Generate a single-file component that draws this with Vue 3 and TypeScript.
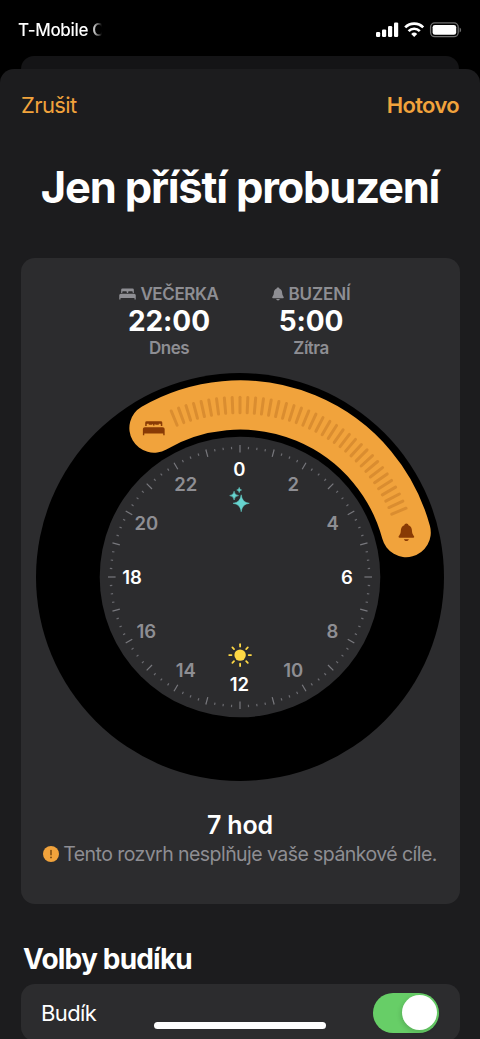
<script setup lang="ts">
interface Tick {
  angle: number
  major: boolean
}

interface HourLabel {
  text: string
  x: number
  y: number
  strong: boolean
}

const ticks: Tick[] = Array.from({ length: 96 }, (_, i) => ({
  angle: i * 3.75,
  major: i % 4 === 0,
}))

const grips: number[] = Array.from({ length: 37 }, (_, i) => -22.5 + i * 2.5)

const hours: HourLabel[] = Array.from({ length: 12 }, (_, i) => {
  const hour = i * 2
  const a = (hour * 15 * Math.PI) / 180
  return {
    text: String(hour),
    x: 203.4 + Math.sin(a) * 107.5,
    y: 210.9 - Math.cos(a) * 107.5,
    strong: hour % 6 === 0,
  }
})

function polar(angle: number, r: number): string {
  const a = (angle * Math.PI) / 180
  return `${(204 + Math.sin(a) * r).toFixed(2)} ${(204 - Math.cos(a) * r).toFixed(2)}`
}

const arc = `M${polar(-30, 172)} A172 172 0 0 1 ${polar(75, 172)}`
</script>

<template>
  <div class="phone">
    <header class="status">
      <span class="carrier">T-Mobile C</span>
      <svg class="status-icons" width="88" height="18" viewBox="0 0 88 18">
        <g fill="#fff">
          <rect x="1" y="11" width="4.2" height="5" rx="1.2" />
          <rect x="7" y="8.4" width="4.2" height="7.6" rx="1.2" />
          <rect x="13" y="5" width="4.2" height="11" rx="1.2" />
          <rect x="19" y="1.4" width="4.2" height="14.6" rx="1.2" />
        </g>
        <g fill="none" stroke="#fff" stroke-width="2.7">
          <path d="M30.2 6.4a12.6 12.6 0 0 1 18 0" />
          <path d="M33.6 10.1a7.9 7.9 0 0 1 11.2 0" />
        </g>
        <path d="M39.2 16.1l-3-3.1a4.3 4.3 0 0 1 6 0z" fill="#fff" />
        <rect x="55.6" y="1.9" width="27.6" height="13.8" rx="4.2" fill="none" stroke="#6e6e6e" stroke-width="1.3" />
        <rect x="57.6" y="3.9" width="23.6" height="9.9" rx="2.4" fill="#fff" />
        <path d="M84.6 6.4c2 .7 2 4.3 0 5z" fill="#6e6e6e" />
      </svg>
    </header>

    <div class="back-sheet"></div>

    <main class="sheet">
      <nav class="nav">
        <button class="link" type="button">Zrušit</button>
        <button class="link done" type="button">Hotovo</button>
      </nav>

      <h1>Jen příští probuzení</h1>

      <section class="card">
        <div class="times">
          <div class="time">
            <div class="label">
              <svg width="17" height="12" viewBox="0 0 24 17">
                <path d="M3 7V2.600Q3 .6 5 .6h14q2 0 2 2V7h-1.600V5.600q0-1-1-1h-4.400q-1 0-1 1V7h-2V5.600q0-1-1-1H5.600q-1 0-1 1V7z" />
                <path d="M.3 16.300V10.300Q.3 8 2.600 8h18.800q2.300 0 2.300 2.300v6h-1.800v-2.300H2.100v2.300z" />
              </svg>
              <span>VEČERKA</span>
            </div>
            <div class="value">22:00</div>
            <div class="day">Dnes</div>
          </div>
          <div class="time">
            <div class="label wake">
              <svg width="12" height="14" viewBox="0 0 18 20">
                <path d="M9 .3c1.300 0 2.100.8 2.300 1.900 2.500.9 3.900 3.200 3.900 6.100 0 4.300 2.500 5.300 2.500 7.100 0 .7-.5 1-1.200 1h-15c-.7 0-1.200-.3-1.200-1 0-1.800 2.500-2.800 2.500-7.100 0-2.900 1.400-5.200 3.900-6.100C6.900 1.100 7.700.3 9 .3z" />
                <path d="M6.300 17.500h5.400c-.2 1.300-1.300 2.200-2.700 2.200s-2.500-.9-2.700-2.200z" />
              </svg>
              <span>BUZENÍ</span>
            </div>
            <div class="value">5:00</div>
            <div class="day">Zítra</div>
          </div>
        </div>

        <svg class="dial" width="408" height="408" viewBox="0 0 408 408">
          <circle cx="204" cy="204" r="204" fill="#000" />
          <circle cx="204" cy="204" r="140.300" fill="#2c2c2e" />
          <line
            v-for="t in ticks"
            :key="t.angle"
            x1="204"
            x2="204"
            :y1="t.major ? 72 : 73.600"
            :y2="t.major ? 79.600 : 76"
            :class="t.major ? 'tick major' : 'tick'"
            :transform="`rotate(${t.angle} 204 204)`"
          />
          <path :d="arc" class="arc" />
          <line
            v-for="g in grips"
            :key="g"
            x1="204"
            x2="204"
            y1="24.300"
            y2="39.700"
            class="grip"
            :transform="`rotate(${g} 204 204)`"
          />
          <g fill="#883a05" transform="translate(106.600 47.900) scale(.93 .87)">
            <path d="M2.800 5.800V2Q2.800.3 4.500.3h15q1.700 0 1.700 1.700v3.800h-1.600V4.200q0-.9-.8-.9h-1.400v1.200h-3.600v-.6h-1v1.300h-1.600V3.900h-1v.6H6.600V3.300H5.200q-.8 0-.8.9v1.600z" />
            <path d="M.3 16.500V9.400Q.3 7.300 2.400 7.300h19.200q2.100 0 2.100 2.100v7.100h-1.500v-2.100H1.800v2.100z" />
          </g>
          <g fill="#883a05" transform="translate(362.300 150.200) scale(.9 .9)">
            <path d="M9 .3c1.300 0 2.100.8 2.300 1.900 2.500.9 3.900 3.200 3.900 6.100 0 4.300 2.500 5.300 2.500 7.100 0 .5-.5.7-1.200.7h-15c-.7 0-1.200-.2-1.200-.7 0-1.800 2.500-2.800 2.500-7.100 0-2.900 1.400-5.200 3.900-6.100C6.900 1.100 7.700.3 9 .3z" />
            <path d="M6.300 17.700h5.400c-.2 1.200-1.300 2-2.700 2s-2.500-.8-2.700-2z" />
          </g>
          <text
            v-for="h in hours"
            :key="h.text"
            :x="h.x"
            :y="h.y"
            :class="h.strong ? 'hour strong' : 'hour'"
          >{{ h.text }}</text>
          <g fill="#66d4cf">
            <path d="M205.200 121.800Q206 129.500 213.300 130.300Q206 131.100 205.200 138.800Q204.400 131.100 197 130.300Q204.400 129.500 205.200 121.800z" stroke="#66d4cf" stroke-width=".5" stroke-linejoin="round" />
            <path d="M198.100 118.200q.4 4 4.400 4.400-4 .4-4.400 4.400-.4-4-4.400-4.400 4-.4 4.400-4.400z" stroke="#66d4cf" stroke-width=".5" />
            <path d="M203.200 114.300q.2 2.500 2.500 2.700-2.300.2-2.500 2.700-.2-2.500-2.500-2.700 2.300-.2 2.500-2.700z" stroke="#66d4cf" stroke-width=".4" />
          </g>
          <g transform="translate(204.100 282.100)">
            <circle r="5.700" fill="#fed845" />
            <line
              v-for="r in 8"
              :key="r"
              y1="-8.600"
              y2="-10.900"
              class="ray"
              :transform="`rotate(${r * 45})`"
            />
          </g>
        </svg>

        <div class="duration">7 hod</div>
        <div class="note">
          <svg width="16" height="16" viewBox="0 0 16 16">
            <circle cx="8" cy="8" r="8" fill="#f1a33c" />
            <path d="M8 4.500v4.300" stroke="#7a4a10" stroke-width="1.500" stroke-linecap="round" />
            <circle cx="8" cy="11.400" r=".95" fill="#7a4a10" />
          </svg>
          <span>Tento rozvrh nesplňuje vaše spánkové cíle.</span>
        </div>
      </section>

      <h2>Volby budíku</h2>
      <section class="row">
        <span>Budík</span>
        <span class="toggle"><span class="knob"></span></span>
      </section>
    </main>

    <div class="home"></div>
  </div>
</template>

<style>
body {
  background: #000;
}
</style>

<style scoped>
.phone {
  position: relative;
  width: 480px;
  height: 1039px;
  overflow: hidden;
  background: #000;
  color: #fff;
  font-family: Inter, "Liberation Sans", sans-serif;
  display: flex;
  flex-direction: column;
}
.status {
  box-sizing: border-box;
  height: 56px;
  flex: none;
  display: flex;
  justify-content: space-between;
  align-items: flex-start;
  padding: 20px 17px 0 18px;
}
.carrier {
  white-space: nowrap;
  font-size: 17px;
  font-weight: 500;
  line-height: 21px;
  letter-spacing: -0.32px;
  -webkit-mask-image: linear-gradient(90deg, #000 74px, transparent 84px);
  mask-image: linear-gradient(90deg, #000 74px, transparent 84px);
}
.status-icons {
  margin-top: 1px;
}
.back-sheet {
  flex: none;
  height: 13px;
  margin: 0 21px;
  border-radius: 13px 13px 0 0;
  background: #141416;
}
.sheet {
  flex: none;
  height: 970px;
  border-radius: 14px 14px 0 0;
  background: #1c1c1e;
}
.nav {
  display: flex;
  justify-content: space-between;
  padding: 22px 21px 0;
}
.link {
  padding: 0;
  border: 0;
  background: none;
  color: #f1a33c;
  font: 400 22px/28px Inter, "Liberation Sans", sans-serif;
  letter-spacing: -0.6px;
}
.done {
  font-weight: 600;
  letter-spacing: -0.65px;
}
h1 {
  margin: 41px 0 0;
  text-align: center;
  white-space: nowrap;
  font-size: 43.5px;
  font-weight: 700;
  line-height: 54px;
  letter-spacing: -1.2px;
}
.card {
  box-sizing: border-box;
  height: 646px;
  margin: 44px 20.5px 0;
  padding-top: 25px;
  border-radius: 14px;
  background: #2c2c2e;
  display: flex;
  flex-direction: column;
  align-items: center;
}
.times {
  display: flex;
}
.time {
  width: 142px;
  display: flex;
  flex-direction: column;
  align-items: center;
}
.label {
  display: flex;
  align-items: center;
  gap: 4px;
  height: 22px;
  color: #8e8e93;
  font-size: 17px;
  font-weight: 600;
  line-height: 22px;
  letter-spacing: -0.38px;
}
.label.wake {
  letter-spacing: -0.1px;
  padding-left: 1px;
}
.label svg {
  fill: #8e8e93;
}
.value {
  font-size: 28px;
  font-weight: 700;
  line-height: 32px;
  letter-spacing: -0.1px;
}
.day {
  color: #8e8e93;
  font-size: 17px;
  font-weight: 600;
  line-height: 22px;
  letter-spacing: -0.5px;
}
.dial {
  flex: none;
  margin-top: 14px;
}
.tick {
  stroke: #6c6c71;
  stroke-width: 1.2;
}
.tick.major {
  stroke: #78787d;
}
.arc {
  fill: none;
  stroke: #f1a33c;
  stroke-width: 49.3;
  stroke-linecap: round;
}
.grip {
  stroke: #da8d30;
  stroke-width: 3;
  stroke-linecap: round;
}
.hour {
  fill: #8e8e93;
  font-size: 18.5px;
  font-weight: 600;
  text-anchor: middle;
  letter-spacing: -0.1px;
}
.hour.strong {
  fill: #fff;
}
.ray {
  stroke: #fed845;
  stroke-width: 1.8;
  stroke-linecap: round;
}
.duration {
  margin-top: 28px;
  font-size: 25px;
  font-weight: 600;
  line-height: 32px;
  letter-spacing: -0.15px;
}
.note {
  display: flex;
  align-items: center;
  gap: 4px;
  height: 26px;
  color: #8e8e93;
  font-size: 19.5px;
  line-height: 26px;
  letter-spacing: -0.56px;
  white-space: nowrap;
}
h2 {
  margin: 38px 0 0 23px;
  font-size: 28px;
  font-weight: 700;
  line-height: 34px;
  letter-spacing: -0.8px;
}
.row {
  box-sizing: border-box;
  height: 57px;
  margin: 8px 20.5px 0;
  padding: 0 20.5px;
  border-radius: 14px;
  background: #2c2c2e;
  display: flex;
  align-items: center;
  justify-content: space-between;
  font-size: 22px;
  letter-spacing: -0.6px;
}
.toggle {
  box-sizing: border-box;
  width: 66px;
  height: 40px;
  padding: 2.5px;
  border-radius: 20px;
  background: #67ce67;
  display: flex;
  justify-content: flex-end;
}
.knob {
  width: 35px;
  height: 35px;
  border-radius: 50%;
  background: #fff;
  box-shadow: -1px 2px 5px rgba(0, 0, 0, 0.15);
}
.home {
  position: absolute;
  left: 154px;
  bottom: 10px;
  width: 172px;
  height: 7px;
  border-radius: 4px;
  background: #fff;
}
</style>
